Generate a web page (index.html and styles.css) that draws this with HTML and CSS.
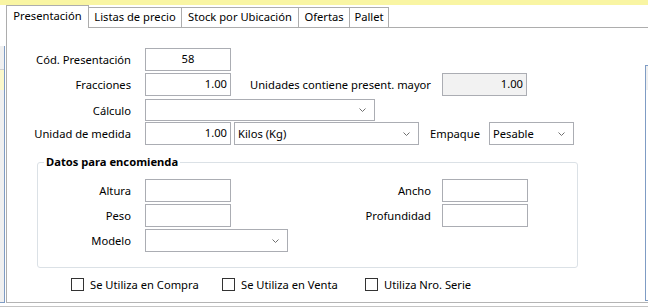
FILE: index.html
```html
<!DOCTYPE html>
<html lang="es">
<head>
  <meta charset="UTF-8" />
  <title>Presentación</title>
  <link rel="stylesheet" href="styles.css">
</head>
<body>
  <div class="topbar"></div>

  <div class="window">
    <div class="side-left">
      <div class="peek-left">
        <div class="peek-yellow"></div>
      </div>
    </div>

    <div class="tabcontrol">
      <div class="tabs">
        <div class="tab active tab-1">Presentación</div>
        <div class="tab tab-2">Listas de precio</div>
        <div class="tab tab-3">Stock por Ubicación</div>
        <div class="tab tab-4">Ofertas</div>
        <div class="tab tab-5">Pallet</div>
        <div class="tab-fill"></div>
      </div>

      <div class="tabpage">
        <div class="form">
          <div class="row row-cod">
            <label class="lbl">Cód. Presentación</label>
            <div class="field center">58</div>
          </div>

          <div class="row row-frac">
            <label class="lbl">Fracciones</label>
            <div class="field num">1.00</div>
            <label class="lbl-mayor">Unidades contiene present. mayor</label>
            <div class="field num readonly">1.00</div>
          </div>

          <div class="row row-calc">
            <label class="lbl">Cálculo</label>
            <div class="select sel-calc">
              <span></span>
              <svg class="chev" width="7" height="4" viewBox="0 0 7 4"><polyline points="0.5,0.5 3.5,3.5 6.5,0.5" /></svg>
            </div>
          </div>

          <div class="row row-unidad">
            <label class="lbl">Unidad de medida</label>
            <div class="field num">1.00</div>
            <div class="select sel-unidad">
              <span>Kilos (Kg)</span>
              <svg class="chev" width="7" height="4" viewBox="0 0 7 4"><polyline points="0.5,0.5 3.5,3.5 6.5,0.5" /></svg>
            </div>
            <label class="lbl-empaque">Empaque</label>
            <div class="select sel-empaque">
              <span>Pesable</span>
              <svg class="chev" width="7" height="4" viewBox="0 0 7 4"><polyline points="0.5,0.5 3.5,3.5 6.5,0.5" /></svg>
            </div>
          </div>

          <div class="group">
            <span class="group-title">Datos para encomienda</span>
            <div class="group-grid">
              <label class="glbl">Altura</label>
              <div class="field"></div>
              <label class="glbl2">Ancho</label>
              <div class="field"></div>

              <label class="glbl">Peso</label>
              <div class="field"></div>
              <label class="glbl2">Profundidad</label>
              <div class="field"></div>

              <label class="glbl">Modelo</label>
              <div class="select sel-modelo">
                <span></span>
                <svg class="chev" width="7" height="4" viewBox="0 0 7 4"><polyline points="0.5,0.5 3.5,3.5 6.5,0.5" /></svg>
              </div>
            </div>
          </div>

          <div class="checks">
            <div class="check check-compra"><span class="box"></span>Se Utiliza en Compra</div>
            <div class="check check-venta"><span class="box"></span>Se Utiliza en Venta</div>
            <div class="check check-serie"><span class="box"></span>Utiliza Nro. Serie</div>
          </div>
        </div>

        <div class="peek-right"></div>
      </div>
    </div>
  </div>

  <div class="footer"></div>
</body>
</html>
```

FILE: styles.css
```css
* {
  margin: 0;
  padding: 0;
  box-sizing: border-box;
}

body {
  width: 648px;
  height: 307px;
  overflow: hidden;
  background: #ffffff;
  font-family: "Noto Sans", "Open Sans", sans-serif;
  font-size: 11.2px;
  color: #000;
}

.topbar {
  height: 5px;
  background: #f9f5a3;
}

.window {
  display: flex;
  height: 298px;
}

/* bits of the controls behind the tab control */
.side-left {
  width: 6px;
  padding-top: 41px;
  display: flex;
}

.peek-left {
  width: 5px;
  background: #f0f0f0;
  border-right: 1px solid #7f9cc4;
  border-bottom: 1px solid #7f9cc4;
  padding-top: 23px;
}

.peek-yellow {
  height: 21px;
  border-top: 1px solid #cfcfcf;
  background: #fbf8cc;
}

.tabcontrol {
  flex: 1;
  display: flex;
  flex-direction: column;
}

.tabs {
  display: flex;
  align-items: flex-end;
  height: 22px;
}

.tab {
  height: 20px;
  border: 1px solid #adadad;
  border-left: none;
  border-bottom: none;
  text-align: center;
  line-height: 18px;
  background: #fff;
  position: relative;
}

.tab.active {
  height: 23px;
  border-left: 1px solid #adadad;
  margin-bottom: -1px;
  z-index: 1;
  line-height: 20px;
}

.tab-1 { width: 83px; }
.tab-2 { width: 93px; }
.tab-3 { width: 117px; }
.tab-4 { width: 51px; }
.tab-5 { width: 39px; }

.tab-fill {
  flex: 1;
}

.tabpage {
  flex: 1;
  display: flex;
  border-top: 1px solid #adadad;
  border-left: 1px solid #adadad;
  border-bottom: 1px solid #b4b4b4;
}

.form {
  flex: 1;
  padding-top: 20px;
}

.row {
  display: flex;
  align-items: center;
  height: 23px;
}

.row-frac { margin-top: 2px; }
.row-calc { margin-top: 3px; height: 22px; }
.row-unidad { margin-top: 1px; }

.lbl {
  width: 124px;
  text-align: right;
  margin-right: 14px;
}

.lbl-mayor {
  width: 200px;
  text-align: right;
  margin-right: 11px;
}

.lbl-empaque {
  margin-left: 11px;
  margin-right: 9px;
}

.field {
  width: 86px;
  height: 23px;
  border: 1px solid #abadb3;
  background: #fff;
  padding: 0 3px;
  line-height: 20px;
}

.field.center { text-align: center; }
.field.num { text-align: right; }
.field.readonly { background: #f2f2f2; width: 85px; }

.select {
  display: flex;
  align-items: center;
  justify-content: space-between;
  height: 23px;
  border: 1px solid #abadb3;
  background: #fff;
  padding: 0 8px 0 3px;
}

.chev {
  fill: none;
  stroke: #707070;
  stroke-width: 1;
}

.sel-calc { width: 230px; height: 22px; }
.sel-unidad { width: 185px; margin-left: 3px; }
.sel-empaque { width: 85px; }

.group {
  position: relative;
  margin: 17px 0 0 30px;
  width: 541px;
  height: 106px;
  border: 1px solid #dbe1e6;
  border-radius: 3px;
  padding-top: 16px;
}

.group-title {
  position: absolute;
  top: -9px;
  left: 6px;
  padding: 0 2px;
  background: #fff;
  font-weight: bold;
  line-height: 16px;
}

.group-grid {
  display: grid;
  grid-template-columns: 107px 86px 211px 86px;
  grid-auto-rows: 23px;
  row-gap: 2px;
  align-items: center;
}

.glbl {
  text-align: right;
  padding-right: 14px;
}

.glbl2 {
  text-align: right;
  padding-right: 11px;
}

.sel-modelo {
  width: 143px;
  grid-column: 2 / span 3;
}

.checks {
  display: flex;
  align-items: center;
  margin-top: 9px;
  padding-left: 64px;
}

.check {
  display: flex;
  align-items: center;
}

.box {
  width: 13px;
  height: 13px;
  border: 1px solid #333;
  background: #fff;
  margin-right: 6px;
}

.check-compra { width: 151px; }
.check-venta { width: 143px; }

.peek-right {
  width: 3px;
  margin-top: 37px;
  height: 236px;
  border: 1px solid #7f9cc4;
  border-right: none;
  background: linear-gradient(#f0f0f0 0, #f0f0f0 24px, #fff 24px);
}

.footer {
  height: 4px;
  border-top: 2px solid #fff;
  border-bottom: 1px solid #c4c4c4;
  background: #fff;
}
```
